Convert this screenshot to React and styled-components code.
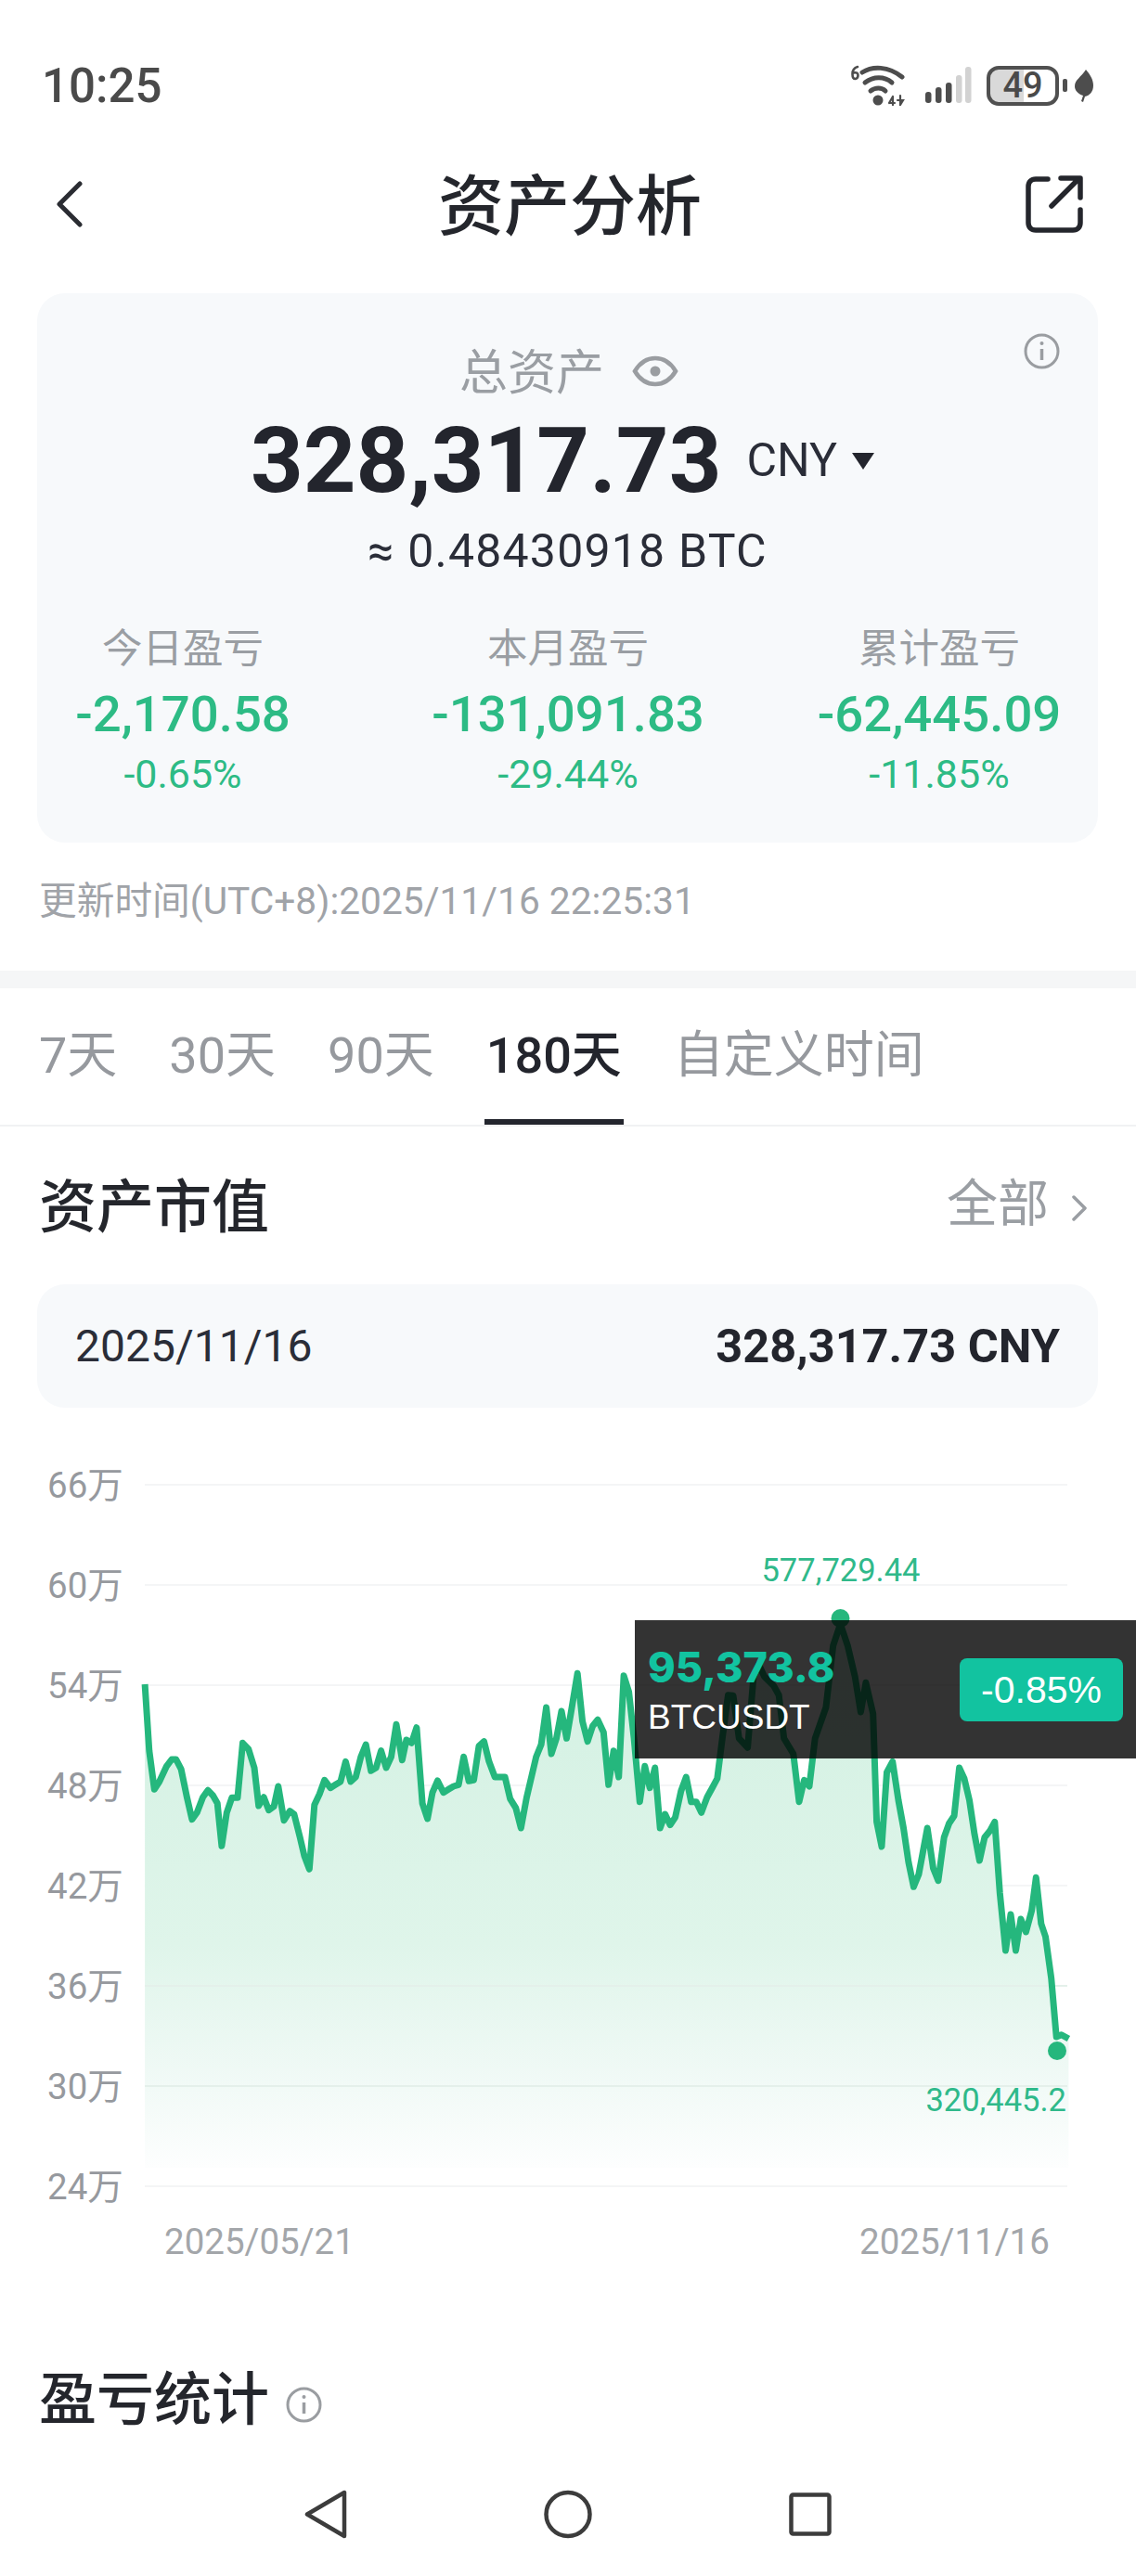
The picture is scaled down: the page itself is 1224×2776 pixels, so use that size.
import React from "react";
import styled, { createGlobalStyle } from "styled-components";

const GlobalStyle = createGlobalStyle`
  html, body {
    margin: 0;
    padding: 0;
    background: #fff;
  }
  body {
    font-family: Roboto, "Noto Sans CJK SC", sans-serif;
    color: #23252d;
  }
`;

const Page = styled.div`
  width: 1224px;
  height: 2776px;
  overflow: hidden;
  background: #fff;
`;

const StatusBar = styled.div`
  height: 72px;
  padding: 56px 46px 0 45px;
  display: flex;
  justify-content: space-between;
  align-items: center;
`;

const Clock = styled.span`
  margin-top: 2px;
  font-size: 51px;
  line-height: 72px;
  font-weight: 500;
  color: #4a4a4a;
`;

const StatusIcons = styled.div`
  display: flex;
  align-items: center;
  gap: 22px;
`;

const Battery = styled.div`
  position: relative;
  box-sizing: border-box;
  width: 78px;
  height: 43px;
  margin: 0 -5px 0 -6px;
  border: 4px solid #505050;
  border-radius: 13px;
  background: linear-gradient(90deg, #d9d9d9 0 36px, #fff 36px);
  font-size: 38px;
  line-height: 35px;
  font-weight: 500;
  text-align: center;
  color: #4a4a4a;
  &::after {
    content: "";
    position: absolute;
    right: -13px;
    top: 10px;
    width: 5px;
    height: 14px;
    border-radius: 2px;
    background: #505050;
  }
`;

const Header = styled.header`
  height: 184px;
  padding: 0 57px 4px 61px;
  display: grid;
  grid-template-columns: 1fr auto 1fr;
  align-items: center;
`;

const ShareSlot = styled.div`
  justify-self: end;
  line-height: 0;
`;

const PageTitle = styled.h1`
  margin: 5px 0 0;
  font-size: 71px;
  line-height: 80px;
  font-weight: 500;
  color: #24262c;
`;

const Card = styled.section`
  position: relative;
  margin: 0 41px 0 40px;
  padding: 60px 0 51px;
  border-radius: 30px;
  background: #f7f9fb;
`;

const InfoCorner = styled.div`
  position: absolute;
  top: 43px;
  right: 41px;
  line-height: 0;
`;

const LabelRow = styled.div`
  display: flex;
  justify-content: center;
  align-items: center;
  gap: 30px;
  height: 48px;
  padding-left: 3px;
  font-size: 52px;
  color: #9a9ea3;
`;

const LabelText = styled.span`
  margin-bottom: 6px;
`;

const AmountRow = styled.div`
  display: flex;
  align-items: center;
  height: 96px;
  margin-top: 24px;
  padding-left: 230px;
`;

const Amount = styled.span`
  font-size: 99px;
  line-height: 96px;
  font-weight: 700;
  color: #23252d;
`;

const Currency = styled.span`
  margin-left: 27px;
  font-size: 50px;
  line-height: 96px;
  color: #2a2d38;
`;

const Caret = styled.span`
  width: 0;
  height: 0;
  margin-left: 16px;
  margin-top: 2px;
  border-left: 12px solid transparent;
  border-right: 12px solid transparent;
  border-top: 18px solid #23252d;
`;

const BtcRow = styled.div`
  margin-top: 25px;
  font-size: 50px;
  line-height: 50px;
  letter-spacing: 1.2px;
  text-align: center;
  color: #2a2d38;
`;

const StatsGrid = styled.div`
  display: grid;
  grid-template-columns: 314px 516px 284px;
  margin-top: 54px;
`;

const Stat = styled.div`
  display: flex;
  flex-direction: column;
  align-items: center;
`;

const StatLabel = styled.div`
  font-size: 43.5px;
  line-height: 54px;
  color: #9a9ea3;
`;

const StatValue = styled.div`
  margin-top: 14px;
  font-size: 54.5px;
  line-height: 56px;
  font-weight: 500;
  color: #2dbb85;
`;

const StatPercent = styled.div`
  margin-top: 14px;
  font-size: 43px;
  line-height: 46px;
  color: #2dbb85;
`;

const UpdatedAt = styled.div`
  margin: 38px 0 0 42px;
  font-size: 40.7px;
  line-height: 50px;
  color: #a0a3a8;
`;

const Band = styled.div`
  height: 19px;
  margin-top: 50px;
  background: #f5f6f7;
`;

const Tabs = styled.nav`
  display: flex;
  gap: 52px;
  padding-left: 40px;
  border-bottom: 2px solid #f1f2f3;
`;

const Tab = styled.div`
  box-sizing: border-box;
  height: 147px;
  padding: 43px 2px 0;
  font-size: 54px;
  line-height: 60px;
  font-weight: ${(p) => (p.$active ? 500 : 400)};
  color: ${(p) => (p.$active ? "#23252d" : "#96999e")};
  border-bottom: 6px solid ${(p) => (p.$active ? "#23252d" : "transparent")};
`;

const SectionHead = styled.div`
  display: flex;
  align-items: center;
  justify-content: space-between;
  height: 70px;
  margin-top: ${(p) => p.$top}px;
  padding: 0 53px 0 42px;
`;

const SectionTitle = styled.h2`
  margin: 0;
  font-size: 62px;
  line-height: 70px;
  font-weight: 500;
  color: #24262c;
  display: flex;
  align-items: center;
`;

const AllLink = styled.div`
  display: flex;
  align-items: center;
  gap: 25px;
  font-size: 55px;
  line-height: 60px;
  color: #9a9ea3;
  & > span {
    margin-top: -10px;
  }
`;

const DateCard = styled.div`
  display: flex;
  justify-content: space-between;
  align-items: center;
  height: 133px;
  margin: 47px 41px 0 40px;
  padding: 0 41px;
  border-radius: 30px;
  background: #f7f9fb;
  font-size: 48px;
  color: #2a2d38;
`;

const DateTotal = styled.span`
  font-size: 50.5px;
  font-weight: 700;
  color: #23252d;
`;

const ChartWrap = styled.div`
  position: relative;
  height: 930px;
`;

const ChartSvg = styled.svg`
  display: block;
`;

const AxisText = styled.text`
  font-size: 38.5px;
  fill: #96999e;
  dominant-baseline: central;
`;

const DateText = styled.text`
  font-size: 38.5px;
  fill: #a3a6aa;
  dominant-baseline: central;
`;

const PointText = styled.text`
  font-size: 34.5px;
  fill: #2fb98a;
  dominant-baseline: central;
`;

const Ticker = styled.div`
  position: absolute;
  left: 684px;
  top: 229px;
  box-sizing: border-box;
  width: 540px;
  height: 149px;
  padding: 0 14px;
  display: flex;
  align-items: center;
  justify-content: space-between;
  background: rgba(0, 0, 0, 0.8);
  font-family: "Liberation Sans", sans-serif;
`;

const TickerPrice = styled.div`
  font-family: Inter, sans-serif;
  font-size: 45px;
  line-height: 54px;
  font-weight: 800;
  color: #12c3a0;
`;

const TickerName = styled.div`
  margin-top: 6px;
  font-size: 37px;
  line-height: 42px;
  color: #fff;
`;

const TickerBadge = styled.div`
  width: 176px;
  height: 68px;
  border-radius: 8px;
  background: #12c3a0;
  font-size: 41px;
  line-height: 68px;
  text-align: center;
  color: #fff;
`;

const InfoInline = styled.span`
  margin-left: 18px;
  margin-top: 8px;
  line-height: 0;
`;

const NavBar = styled.div`
  height: 98px;
  margin-top: 38px;
  padding-bottom: 18px;
  display: flex;
  justify-content: center;
  align-items: center;
  gap: 212px;
`;

// traced off the reference: x is px * 1.281, y is (px - 1540) * 3
const traced = [
  [200,825],[206,1040],[213,1165],[220,1140],[230,1090],[237,1068],[243,1068],[250,1100],[258,1190],[265,1262],
  [272,1240],[280,1190],[287,1168],[294,1185],[300,1210],[306,1348],[313,1240],[320,1192],[328,1192],[335,1015],
  [343,1035],[351,1095],[357,1218],[364,1190],[371,1232],[378,1220],[384,1155],[392,1265],[400,1235],[406,1245],
  [414,1320],[420,1380],[427,1423],[434,1215],[441,1180],[448,1135],[456,1160],[463,1150],[470,1140],[477,1075],
  [484,1140],[491,1125],[498,1060],[505,1020],[512,1105],[519,1095],[526,1040],[533,1095],[540,1060],[547,955],
  [555,1070],[561,1005],[568,1015],[575,965],[583,1210],[590,1260],[597,1175],[604,1137],[612,1175],[619,1165],
  [626,1155],[633,1150],[640,1060],[647,1138],[654,1135],[661,1025],[668,1010],[675,1075],[683,1125],[697,1125],
  [704,1195],[712,1225],[719,1290],[727,1190],[740,1060],[747,1020],[754,900],[761,1050],[768,1000],[775,912],
  [782,1000],[790,890],[797,790],[804,945],[811,1010],[818,960],[825,940],[833,980],[840,1150],[847,1040],
  [854,1125],[861,797],[868,850],[875,1000],[883,1205],[890,1090],[897,1160],[904,1095],[911,1290],[918,1245],
  [925,1280],[932,1255],[940,1170],[947,1125],[954,1205],[961,1205],[968,1240],[976,1190],[983,1160],[990,1130],
  [997,1000],[1005,860],[1012,862],[1020,1000],[1032,1030],[1040,800],[1047,760],[1055,800],[1068,830],[1075,860],
  [1082,1000],[1095,1050],[1103,1205],[1110,1135],[1117,1155],[1125,1000],[1140,900],[1150,700],[1160,630],[1170,700],
  [1180,800],[1188,915],[1195,820],[1205,920],[1210,1270],[1217,1350],[1224,1110],[1232,1075],[1240,1200],[1247,1290],
  [1254,1400],[1261,1480],[1268,1440],[1280,1290],[1288,1420],[1295,1460],[1303,1320],[1310,1275],[1317,1250],[1324,1095],
  [1331,1130],[1338,1200],[1345,1310],[1352,1395],[1359,1320],[1366,1300],[1373,1270],[1380,1500],
  [1388,1686],[1395,1569],[1402,1686],[1409,1584],[1416,1626],[1424,1557],[1430,1450],[1437,1599],[1443,1641],
  [1451,1775],[1458,1965],[1465,1958],[1475,1971],
];

const points = traced.map(([x, y]) => [+(x / 1.281).toFixed(1), +(1540 + y / 3).toFixed(1)]);
const linePath = points.map(([x, y], i) => `${i ? "L" : "M"}${x} ${y}`).join(" ");
const lastX = points[points.length - 1][0];
const areaPath = `${linePath} L${lastX} 2336 L${points[0][0]} 2336 Z`;

const gridLines = [
  ["66万", 1600],
  ["60万", 1708],
  ["54万", 1816],
  ["48万", 1924],
  ["42万", 2032],
  ["36万", 2140],
  ["30万", 2248],
  ["24万", 2356],
];

const stats = [
  { label: "今日盈亏", value: "-2,170.58", percent: "-0.65%" },
  { label: "本月盈亏", value: "-131,091.83", percent: "-29.44%" },
  { label: "累计盈亏", value: "-62,445.09", percent: "-11.85%" },
];

const tabs = ["7天", "30天", "90天", "180天", "自定义时间"];

const InfoIcon = () => (
  <svg width="39" height="39" viewBox="0 0 39 39" fill="none" stroke="#9a9da1" strokeWidth="3">
    <circle cx="19.5" cy="19.5" r="17.5" />
    <path d="M19.5 17v12" strokeWidth="3.5" />
    <circle cx="19.5" cy="11" r="2" fill="#9a9da1" stroke="none" />
  </svg>
);

const EyeIcon = () => (
  <svg width="50" height="36" viewBox="0 0 50 36" fill="none" stroke="#9a9da1" strokeWidth="4.5">
    <path d="M3 18C9 8 16 4 25 4s16 4 22 14c-6 10-13 14-22 14S9 28 3 18Z" />
    <circle cx="25" cy="18" r="5.5" fill="#9a9da1" stroke="none" />
  </svg>
);

const BackIcon = () => (
  <svg width="28" height="50" viewBox="0 0 28 50" fill="none" stroke="#2a2c32" strokeWidth="5" strokeLinecap="round" strokeLinejoin="round">
    <path d="M25 3 3 25l22 22" />
  </svg>
);

const ShareIcon = () => (
  <svg width="62" height="62" viewBox="0 0 62 62" fill="none" stroke="#24262c" strokeWidth="5.5" strokeLinecap="round" strokeLinejoin="round">
    <path d="M24 4H11C6 4 3 7 3 12v39c0 5 3 8 8 8h40c5 0 8-3 8-8V37" />
    <path d="M28 33 57 4M38 3h21v21" />
  </svg>
);

const ChevronIcon = () => (
  <svg width="16" height="28" viewBox="0 0 16 28" fill="none" stroke="#9a9ea3" strokeWidth="3.5" strokeLinecap="round" strokeLinejoin="round">
    <path d="m2 2 12 12L2 26" />
  </svg>
);

const WifiIcon = () => (
  <svg width="58" height="44" viewBox="0 0 58 44" fill="none" stroke="#4d4d4d" strokeWidth="5" strokeLinecap="round">
    <path d="M12 8c11-7 28-7 43 5" />
    <path d="M15 19c9-7 21-7 29 0" />
    <path d="M21 28c5-4 12-4 16 0" />
    <circle cx="29" cy="38" r="5.5" fill="#4d4d4d" stroke="none" />
    <path d="M7 2C3 3 1.500 6 1.500 10c0 3 1 5 3 5s3-2 3-4-1.500-3.500-5-2.500" strokeWidth="2.6" />
    <path d="M41 41h6M45 34l-4 7M45 34v9M53 33v10l3-5h-6" strokeWidth="2.2" />
  </svg>
);

const SignalIcon = () => (
  <svg width="50" height="40" viewBox="0 0 50 40" fill="#4d4d4d">
    <rect x="0" y="27" width="6.500" height="12" rx="3" />
    <rect x="11" y="22" width="6.500" height="17" rx="3" />
    <rect x="22" y="17" width="6.500" height="22" rx="3" />
    <rect x="33" y="9" width="6.500" height="30" rx="3" fill="#d2d2d2" />
    <rect x="43" y="0" width="6.500" height="39" rx="3" fill="#d2d2d2" />
  </svg>
);

const LeafIcon = () => (
  <svg width="20" height="35" viewBox="0 0 20 35" fill="#4d4d4d">
    <path d="M12 0c5 6 8 11 8 17 0 7-4 11-9 12l-2 6-2-1 2-6C3 26 0 22 0 18 0 11 7 8 12 0Z" />
  </svg>
);

const NavBack = () => (
  <svg width="46" height="53" viewBox="0 0 46 53" fill="none" stroke="#3c3c3c" strokeWidth="4.500" strokeLinejoin="round">
    <path d="M43 3v47L3 26.500 43 3Z" />
  </svg>
);

const NavHome = () => (
  <svg width="52" height="53" viewBox="0 0 52 53" fill="none" stroke="#3c3c3c" strokeWidth="4.500">
    <circle cx="26" cy="26.500" r="23.500" />
  </svg>
);

const NavRecent = () => (
  <svg width="46" height="47" viewBox="0 0 46 47" fill="none" stroke="#3c3c3c" strokeWidth="4.500" strokeLinejoin="round">
    <rect x="2.500" y="2.500" width="41" height="42" rx="2" />
  </svg>
);

const AssetChart = () => (
  <ChartSvg width="1224" height="930" viewBox="0 1517 1224 930">
    <defs>
      <linearGradient id="assetFill" gradientUnits="userSpaceOnUse" x1="0" y1="1800" x2="0" y2="2336">
        <stop offset="0" stopColor="#d4f1e3" />
        <stop offset="0.55" stopColor="#dff5ea" />
        <stop offset="0.8" stopColor="#eff9f5" />
        <stop offset="1" stopColor="#fdfefe" />
      </linearGradient>
    </defs>
    {gridLines.map(([label, y]) => (
      <g key={label}>
        <line x1="156" x2="1150" y1={y} y2={y} stroke="#f4f5f6" strokeWidth="2" />
        <AxisText x="51" y={y}>{label}</AxisText>
      </g>
    ))}
    <path d={areaPath} fill="url(#assetFill)" />
    {gridLines.slice(5, 7).map(([label, y]) => (
      <line key={label} x1="156" x2="1150" y1={y} y2={y} stroke="#e4f0ea" strokeWidth="2" />
    ))}
    <path d={linePath} fill="none" stroke="#25b77d" strokeWidth="7" strokeLinejoin="round" />
    <circle cx="905.500" cy="1744" r="10" fill="#25b77d" />
    <circle cx="1139" cy="2210" r="10" fill="#25b77d" />
    <PointText x="906" y="1692" textAnchor="middle">577,729.44</PointText>
    <PointText x="1149" y="2263" textAnchor="end">320,445.2</PointText>
    <DateText x="177" y="2415">2025/05/21</DateText>
    <DateText x="926" y="2415">2025/11/16</DateText>
  </ChartSvg>
);

const App = () => (
  <Page>
    <GlobalStyle />
    <StatusBar>
      <Clock>10:25</Clock>
      <StatusIcons>
        <WifiIcon />
        <SignalIcon />
        <Battery>49</Battery>
        <LeafIcon />
      </StatusIcons>
    </StatusBar>
    <Header>
      <BackIcon />
      <PageTitle>资产分析</PageTitle>
      <ShareSlot>
        <ShareIcon />
      </ShareSlot>
    </Header>
    <Card>
      <InfoCorner>
        <InfoIcon />
      </InfoCorner>
      <LabelRow>
        <LabelText>总资产</LabelText>
        <EyeIcon />
      </LabelRow>
      <AmountRow>
        <Amount>328,317.73</Amount>
        <Currency>CNY</Currency>
        <Caret />
      </AmountRow>
      <BtcRow>≈ 0.48430918 BTC</BtcRow>
      <StatsGrid>
        {stats.map((s) => (
          <Stat key={s.label}>
            <StatLabel>{s.label}</StatLabel>
            <StatValue>{s.value}</StatValue>
            <StatPercent>{s.percent}</StatPercent>
          </Stat>
        ))}
      </StatsGrid>
    </Card>
    <UpdatedAt>更新时间(UTC+8):2025/11/16 22:25:31</UpdatedAt>
    <Band />
    <Tabs>
      {tabs.map((t) => (
        <Tab key={t} $active={t === "180天"}>{t}</Tab>
      ))}
    </Tabs>
    <SectionHead $top={53}>
      <SectionTitle>资产市值</SectionTitle>
      <AllLink>
        <span>全部</span>
        <ChevronIcon />
      </AllLink>
    </SectionHead>
    <DateCard>
      <span>2025/11/16</span>
      <DateTotal>328,317.73 CNY</DateTotal>
    </DateCard>
    <ChartWrap>
      <AssetChart />
      <Ticker>
        <div>
          <TickerPrice>95,373.8</TickerPrice>
          <TickerName>BTCUSDT</TickerName>
        </div>
        <TickerBadge>-0.85%</TickerBadge>
      </Ticker>
    </ChartWrap>
    <SectionHead $top={105}>
      <SectionTitle>
        盈亏统计
        <InfoInline>
          <InfoIcon />
        </InfoInline>
      </SectionTitle>
    </SectionHead>
    <NavBar>
      <NavBack />
      <NavHome />
      <NavRecent />
    </NavBar>
  </Page>
);

export default App;
